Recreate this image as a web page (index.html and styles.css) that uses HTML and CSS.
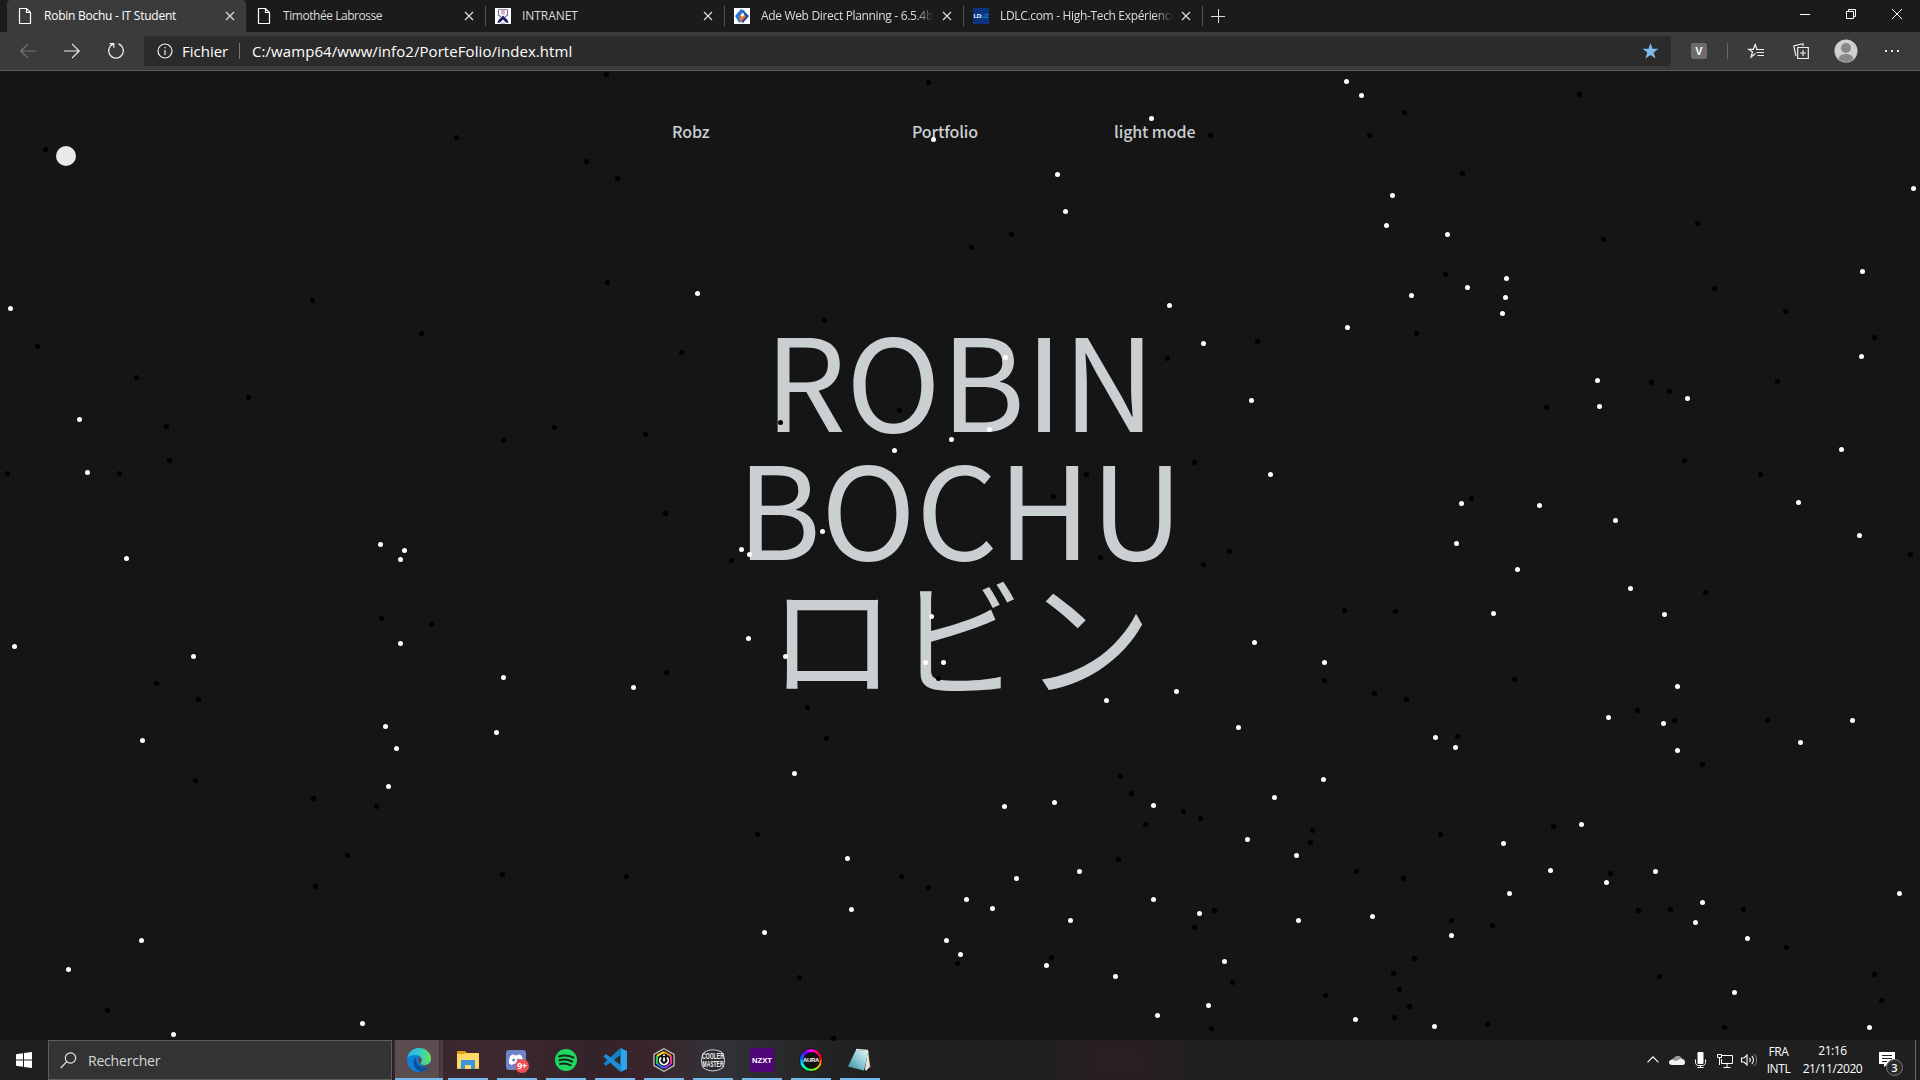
FILE: index.html
```html
<!DOCTYPE html>
<html lang="fr">
<head>
<meta charset="utf-8">
<title>Robin Bochu - IT Student</title>
<link rel="stylesheet" href="styles.css">
</head>
<body>
<div class="screen">
  <header class="tabstrip">
    <div class="tab active">
      <svg class="fav" viewBox="0 0 16 16"><path d="M2.5.5h7l4 4v11h-11zM9.500.5v4h4" fill="none" stroke="#fff" stroke-width="1.2"/></svg>
      <span class="title t1">Robin Bochu - IT Student</span>
      <svg class="close" viewBox="0 0 10 10"><path d="M1 1l8 8M9 1L1 9"/></svg>
    </div>
    <div class="tab">
      <svg class="fav" viewBox="0 0 16 16"><path d="M2.500.5h7l4 4v11h-11zM9.500.5v4h4" fill="none" stroke="#fff" stroke-width="1.2"/></svg>
      <span class="title t2">Timothée Labrosse</span>
      <svg class="close" viewBox="0 0 10 10"><path d="M1 1l8 8M9 1L1 9"/></svg>
    </div>
    <div class="tab sep">
      <svg class="fav" viewBox="0 0 16 16"><path fill="#fff" d="M0 0h16v16H0z"/><path d="M3.500 1.500v5.500l2.500 2M12.500 1.500v5.500l-2.500 2" fill="none" stroke="#6b6eb0" stroke-width="1.200"/><path d="M2.500 15l1-3L8 7.500l4.500 4.500 1 3-2.500-.5-3-3-3 3z" fill="#1d1f66"/><path d="M7 2v4.500M9 2v4.500" stroke="#d65a68"/><path d="M4 1.500h8M6 15.200h4" stroke="#8a8cc0"/></svg>
      <span class="title t3">INTRANET</span>
      <svg class="close" viewBox="0 0 10 10"><path d="M1 1l8 8M9 1L1 9"/></svg>
    </div>
    <div class="tab sep">
      <svg class="fav" viewBox="0 0 16 16"><path fill="#fff" d="M0 0h16v16H0z"/><path d="M1 8l6-7 4 2-5 6 1 5-2 .5z" fill="#2a7bd0"/><path d="M9 2l6 6-6 7-4-3 5-4z" fill="#174f9c"/><path d="M5 9l4-4 3 3.500-5 5.500-2-2 2-2z" fill="#e8703a"/><path d="M6.500 7l2-2 2 2-2 2z" fill="#fff"/></svg>
      <span class="title fade">Ade Web Direct Planning - 6.5.4b</span>
      <svg class="close" viewBox="0 0 10 10"><path d="M1 1l8 8M9 1L1 9"/></svg>
    </div>
    <div class="tab sep">
      <span class="fav ldlc"><b>LD</b><i>LC</i></span>
      <span class="title fade">LDLC.com - High-Tech Expérience</span>
      <svg class="close" viewBox="0 0 10 10"><path d="M1 1l8 8M9 1L1 9"/></svg>
    </div>
    <div class="newtab sep"><svg width="14" height="14" viewBox="0 0 14 14"><path d="M7.500 0v14M0 7.500h14" stroke="#ddd"/></svg></div>
    <div class="wincontrols">
      <svg viewBox="0 0 10 10"><path d="M0 5.500h10"/></svg>
      <svg viewBox="0 0 10 10"><path d="M.5 2.500h7v7h-7zM2.500 2.500v-2h7v7h-2"/></svg>
      <svg viewBox="0 0 10 10"><path d="M0 0l10 10M10 0L0 10"/></svg>
    </div>
  </header>

  <div class="toolbar">
    <svg class="nav-ico dim" viewBox="0 0 16 16"><path d="M16 8H1M8 .8L.8 8 8 15.200"/></svg>
    <svg class="nav-ico" viewBox="0 0 16 16"><path d="M0 8h15M8 .8L15.200 8 8 15.200"/></svg>
    <svg class="nav-ico" viewBox="0 0 16 16"><path d="M10.500.9a7.300 7.300 0 1 1-5 0M1.500.6h4.300v4.200"/></svg>
    <div class="address">
      <svg class="info" viewBox="0 0 16 16"><circle cx="8" cy="8" r="7"/><path d="M8 7v5M8 4v1.300"/></svg>
      <span class="scheme">Fichier</span>
      <span class="bar"></span>
      <span class="url">C:/wamp64/www/info2/PorteFolio/index.html</span>
      <svg class="bookmark" viewBox="0 0 16 16"><path d="M8 0l2 5.700 6 .1-4.800 3.700L13 15.500 8 12l-5 3.500 1.800-6L0 5.800l6-.1z" fill="#7db9ec"/></svg>
    </div>
    <span class="ext">V</span>
    <span class="divider"></span>
    <svg class="act fvs" viewBox="0 0 16 16"><path d="M7.500 10.500L3 14l1.500-5L.8 6.300h4.500L7.200 1.500l1.700 4.700M8 6.500h8M8.500 9.500H16M9.500 12.500H16"/></svg>
    <svg class="act col" viewBox="0 0 16 16"><path d="M4.700 4.500h10.600v11H4.700zM10 7v6M7 10h6M3 13L.8 3l9-2.300.6 2.300"/></svg>
    <svg class="avatar" viewBox="0 0 24 24"><defs><clipPath id="av"><circle cx="12" cy="12" r="11"/></clipPath></defs><circle cx="12" cy="12" r="11.500" fill="#d2d0ce"/><g clip-path="url(#av)" fill="#8a8886"><circle cx="12" cy="9" r="5"/><ellipse cx="12" cy="20" rx="7.500" ry="5"/></g></svg>
    <svg class="dots" viewBox="0 0 16 4"><path d="M1 1h2v2H1zM7 1h2v2H7zM13 1h2v2h-2z" fill="#e8e8e8"/></svg>
  </div>

  <main class="page">
    <nav class="menu"><a class="m1">Robz</a><a class="m2">Portfolio</a><a>light mode</a></nav>
    <h1 class="name">ROBIN<br>BOCHU<br>ロビン</h1>
    <svg class="sky" id="sky" viewBox="0 0 1920 969"></svg>
  </main>

  <footer class="taskbar">
    <div class="start"><svg width="16" height="16" viewBox="0 0 16 16"><path d="M0 2.200L7 1.200v6.300H0zM8 1l8-1v7.500H8zM0 8.500h7v6.300l-7-1zM8 8.500h8V16l-8-1z" fill="#fff"/></svg></div>
    <div class="search"><svg width="17" height="17" viewBox="0 0 17 17"><circle cx="10.500" cy="6" r="5.200"/><path d="M6.800 9.700L.7 16"/></svg><span>Rechercher</span></div>
    <div class="apps">
      <div class="app edge"><svg viewBox="0 0 24 24"><defs><linearGradient id="e1" x1="0" x2="1"><stop offset="0" stop-color="#2cb5e8"/><stop offset=".55" stop-color="#35c9c5"/><stop offset="1" stop-color="#6be34f"/></linearGradient></defs><circle cx="12" cy="12" r="12" fill="#0f7fd8"/><path d="M.3 10C1.500 3.500 6.500 0 12 0c7 0 12 5 12 10.500 0 4-3 6.500-6.500 6.500-2.500 0-4-.8-4-1.800 0-.8 1.200-1.200 1.200-3.200 0-2.700-2.700-5-6.500-5C4.500 7 1.500 8.200.3 10z" fill="url(#e1)"/><path d="M9 9c-4 3-3.500 12 4.500 14.800 3 .2 7-2 9-5.300-3 1.500-7 1.500-9.500-.3-2.600-1.700-4.500-5-4-9.200z" fill="#0c4f94"/><path d="M11 9.500c2.500-.8 4 .8 3.700 2.800-.2 1.300-1.200 2-1.200 3l-1 .7c-1.700-1.800-2.200-4.300-1.500-6.500z" fill="#5b4c50"/><path d="M13.500 16c2.500 2 6.500 2 10-1.500l1.500 2-2.300 2.500c-3.500 1.500-7.200.5-9.200-3z" fill="#5b4c50"/></svg></div>
      <div class="app"><svg viewBox="0 0 24 24"><path d="M1 3h8l2 2h-10z" fill="#d99a00"/><path d="M1 5h22v16H1z" fill="#ffd766"/><path d="M1 3h8v3H1z" fill="#e2a10a"/><path d="M5 12h14v9h-4v-4H9v4H5z" fill="#3c95d6"/><path d="M1 20h4v1H1zM19 20h4v1h-4z" fill="#eab530"/></svg></div>
      <div class="app badge9"><svg viewBox="0 0 24 24"><rect x="1" y="2" width="20" height="20" rx="3" fill="#6f83c9"/><path d="M4 15.500c-.5-3 .3-6 1.700-8C7 6.600 8.500 6.300 8.500 6.300l.7 1h3.600l.7-1s1.500.3 2.800 1.200c1.400 2 2.200 5 1.700 8-1.500 1.300-3.200 1.500-3.200 1.500l-1-1.300H8.200l-1 1.300S5.500 16.800 4 15.500z" fill="#fff"/><circle cx="8.700" cy="12" r="1.500" fill="#6f83c9"/><circle cx="13.300" cy="12" r="1.500" fill="#6f83c9"/></svg><span class="count">9+</span></div>
      <div class="app"><svg viewBox="0 0 24 24"><circle cx="12" cy="12" r="11" fill="#1ed760"/><path d="M5 8.500c5-1.600 10-1 14.500 1.200M5.500 12.300c4.500-1.300 8.500-.8 12.500 1.200M6 16c4-1 7-.6 10.500 1.200" fill="none" stroke="#18251b" stroke-width="2" stroke-linecap="round"/></svg></div>
      <div class="app"><svg viewBox="0 0 24 24"><path d="M17.500 0L24 3v18l-6.500 3z" fill="#2aa5f0"/><path d="M17.500 0v7L3 18l-2.500-2.500z" fill="#1480c8"/><path d="M17.500 24v-7L3 6 .5 8.500z" fill="#1d90dc"/></svg></div>
      <div class="app"><svg viewBox="0 0 24 24"><path d="M12 .8l10 5.600v11.200l-10 5.600-10-5.600V6.400z" fill="#111" stroke="#c8c8c8" stroke-width="1.300"/><g fill="none" stroke-width="2.200"><path d="M5 8l7-4" stroke="#e8dc28"/><path d="M12 4l7 4" stroke="#ee8420"/><path d="M19 8v8" stroke="#e63a8c"/><path d="M19 16l-7 4" stroke="#9b3ae0"/><path d="M12 20l-7-4" stroke="#2a72ee"/><path d="M5 16V8" stroke="#30c55a"/></g><circle cx="12" cy="12" r="6" fill="#111"/><path d="M9 9.500a4.200 4.200 0 1 0 6 0M12 6.500V8M12 9.500v4" fill="none" stroke="#fff" stroke-width="1.800"/></svg></div>
      <div class="app"><svg viewBox="0 0 24 24"><path d="M3 4.500c5-3.500 13-3.500 18 0 3 4 3 11 1 15-6 4.500-14 4.500-20 0-2-4-2-11 1-15z" fill="#2c2d31" stroke="#d4d4d4"/><g font-family="Liberation Sans" font-weight="700" fill="#f2f2f2" text-anchor="middle"><text x="12" y="11.200" font-size="9.500" textLength="22" lengthAdjust="spacingAndGlyphs">COOLER</text><text x="12" y="19.200" font-size="9.500" textLength="21" lengthAdjust="spacingAndGlyphs">MASTER</text></g></svg></div>
      <div class="app"><svg viewBox="0 0 24 24"><path fill="#4f0479" d="M0 0h24v24H0z"/><text x="12" y="15" text-anchor="middle" font-family="Liberation Sans" font-weight="700" font-size="8" fill="#fff" textLength="20" lengthAdjust="spacingAndGlyphs">NZXT</text></svg></div>
      <div class="app"><span class="aura"><b>AURA</b></span></div>
      <div class="app"><svg viewBox="0 0 24 24"><defs><linearGradient id="n1" x1="0" y1="1" x2="1" y2="0"><stop offset="0" stop-color="#2f8ca3"/><stop offset=".6" stop-color="#9fd3de"/><stop offset="1" stop-color="#e4f4f6"/></linearGradient></defs><path d="M20 3l2.500 16-4 2z" fill="#b59b62"/><path d="M20 3l1.500 16-3.500 4-1-2z" fill="#e6e6e0"/><path d="M8 2l12.500 1L16 22.500 0 18.500z" fill="url(#n1)"/><path d="M8 1.500l12 1" stroke="#ddd" stroke-width="1.500"/></svg></div>
    </div>
    <div class="tray">
      <svg class="chev" viewBox="0 0 12 7"><path d="M.5 6.300L6 .8l5.500 5.500" fill="none" stroke="#fff" stroke-width="1.200"/></svg>
      <svg class="cloud" viewBox="0 0 16 10"><path d="M2 6C2 4 4 3 5 3.200 6 .5 11-.8 13 3.500c2 .2 3 1.500 3 3z" fill="#9b9b9b"/><path d="M0 7.500C0 5.500 2 4.500 4 5l3 1 4-2c2 0 5 1.500 5 3.500S14.500 10 13 10H3C1 10 0 9 0 7.500z" fill="#f2f2f2"/></svg>
      <svg class="mic" viewBox="0 0 11 16"><rect x="2.500" width="6" height="12" rx="1" fill="#fff"/><path d="M.5 7.500v3c0 2 1.500 3 3 3h4c1.500 0 3-1 3-3v-3M5.500 13v2.500M2.500 15.500h6" fill="none" stroke="#fff"/></svg>
      <svg class="net" viewBox="0 0 16 14"><path d="M4.500 1.500h11v8h-11V5M10 10v3M6.500 13.500h7M.5.5h4v3h-4zM2.500 4v7" fill="none" stroke="#fff"/></svg>
      <svg class="vol" viewBox="0 0 17 14"><path d="M.5 5v4H3l3 3V2L3 5zM8.500 5c1 1 1 3 0 4M10.800 3c2.200 2 2.200 6 0 8" fill="none" stroke="#fff" stroke-width="1.100"/><path d="M13.300 1c3 3 3 9 0 12" fill="none" stroke="#888"/></svg>
      <div class="lang"><span>FRA</span><span>INTL</span></div>
      <div class="clock"><span class="hour">21:16</span><span>21/11/2020</span></div>
      <div class="notif"><svg viewBox="0 0 16 15"><path d="M0 0h16v12H9l-4 3v-3H0z" fill="#fff"/><path d="M3 3.500h10M3 6.500h10M3 9.500h5" stroke="#222"/></svg><span class="num">3</span></div>
      <span class="desk"></span>
    </div>
  </footer>
</div>
<script src="sky.js"></script>
</body>
</html>
```
FILE: styles.css
```css
* { box-sizing: border-box; }
body { margin: 0; background: #151515; font-family: "Open Sans", "Noto Sans", sans-serif; color: #fff; overflow: hidden; }
svg { display: block; flex: none; overflow: visible; }
.screen { width: 1920px; height: 1080px; display: flex; flex-direction: column; }

.tabstrip { height: 32px; background: #1b1b1b; display: flex; padding-left: 7px; flex: none; }
.tab { width: 239px; flex: none; display: flex; align-items: center; padding: 0 12px 0 10px; }
.tab.active { background: #3b3b3b; border-radius: 4px 4px 0 0; }
.sep { background: linear-gradient(#555, #555) 0 6px / 1px 20px no-repeat; }
.fav { width: 16px; height: 16px; }
.title { width: 175px; margin-left: 11px; font-size: 12px; line-height: 16px; white-space: nowrap; overflow: hidden; letter-spacing: -.33px; color: #dcdcdc; flex: none; }
.title.t1 { color: #fff; letter-spacing: -.25px; }
.title.t2 { letter-spacing: -.45px; }
.title.t3 { letter-spacing: -.05px; }
.fade { -webkit-mask-image: linear-gradient(90deg, #000 88%, transparent 99%); mask-image: linear-gradient(90deg, #000 88%, transparent 99%); }
.close { width: 10px; height: 10px; margin-left: 6px; stroke: #ddd; stroke-width: 1.200; }
.ldlc { background: #0a3480; display: flex; align-items: center; justify-content: center; font: 700 6px "Liberation Sans", sans-serif; letter-spacing: -.2px; flex: none; }
.ldlc i { font-style: normal; color: #149ce0; }
.newtab { width: 34px; padding: 9px 0 0 9px; }
.wincontrols { margin-left: auto; display: flex; gap: 36px; padding: 9px 18px 0 0; }
.wincontrols svg { width: 10px; height: 10px; fill: none; stroke: #fff; }

.toolbar { height: 39px; flex: none; background: #3b3b3b; border-bottom: 1px solid #5c5c5c; display: flex; align-items: center; padding: 0 20px; }
.nav-ico { width: 16px; height: 16px; margin-right: 28px; fill: none; stroke: #eee; stroke-width: 1.200; }
.nav-ico.dim { stroke: #777; }
.address { width: 1527px; height: 30px; margin-left: -8px; background: #2b2b2b; border-radius: 3px; display: flex; align-items: center; padding: 0 12px 0 13px; }
.info { width: 16px; height: 16px; fill: none; stroke: #eee; stroke-width: 1.200; }
.scheme { width: 65px; flex: none; padding-left: 9px; font-size: 15px; }
.bar { width: 1px; height: 16px; flex: none; background: #777; margin: 0 12px 0 1px; }
.url { flex: 1; font-size: 15px; letter-spacing: .07px; }
.bookmark { width: 17px; height: 16px; }
.ext { width: 16px; height: 16px; margin-left: 20px; border-radius: 2px; background: #6c6c6c; font: 700 11px/16px "Liberation Sans", sans-serif; text-align: center; }
.divider { width: 1px; height: 16px; background: #666; margin: 0 20px; }
.act { width: 16px; height: 16px; fill: none; stroke: #eee; stroke-width: 1.200; }
.col { margin: 0 25px 0 29px; }
.avatar { width: 24px; height: 24px; }
.dots { width: 16px; height: 4px; margin-left: 26px; }

.page { height: 969px; flex: none; position: relative; background: #151515; font-family: "Noto Sans CJK JP", sans-serif; color: #cacfd2; }
.menu { height: 242px; padding: 48px 0 0 672px; display: flex; font-size: 16px; line-height: 24px; font-weight: 500; letter-spacing: -.12px; }
.menu a { flex: none; }
.m1 { width: 240px; }
.m2 { width: 202px; }
.name { margin: 0; font-size: 128px; line-height: 128px; font-weight: 400; text-align: center; }
.sky { position: absolute; inset: 0; width: 1920px; height: 969px; }

.taskbar { height: 40px; flex: none; display: flex; background:
  radial-gradient(ellipse 90px 60px at 1120px 20px, #2d1f22, transparent),
  linear-gradient(90deg, #1f1f1f 0 392px, #38242b 394px, #3f2930 490px, #34232a 590px, #3a242b 645px, #323338 715px, #222223 835px, #1f1f1f 900px); }
.start { width: 48px; padding: 12px 16px; }
.search { width: 344px; border: 1px solid #5d5d5d; background: #333; display: flex; align-items: center; padding-left: 11px; font-size: 14px; letter-spacing: -.2px; color: #d8d8d8; }
.search svg { fill: none; stroke: #e8e8e8; stroke-width: 1.200; margin-right: 11px; }
.apps { display: flex; gap: 9px; padding-left: 3px; }
.app { width: 40px; height: 40px; border-bottom: 2px solid #76b9ed; padding: 8px; position: relative; }
.app svg { width: 24px; height: 24px; }
.app.edge { width: 48px; margin-right: -4px; padding-left: 12px; background: linear-gradient(90deg, #5b4c50 44px, #3d3034 44px 45px, #4c3c41 45px); }
.count { position: absolute; left: 18px; top: 19px; width: 14px; height: 14px; border-radius: 50%; background: #ee4f53; font: 700 9px/14px "Open Sans", sans-serif; text-align: center; letter-spacing: -.3px; }
.aura { display: flex; width: 24px; height: 24px; background: conic-gradient(#f0f, #f06, #f00, #fc0, #8f0, #0f6, #0ff, #06f, #60f, #f0f); border: 1px solid #161616; border-radius: 50%; align-items: center; justify-content: center; }
.aura b { width: 17px; height: 17px; border-radius: 50%; background: #101010; font: 700 6px/17px "Liberation Sans", sans-serif; text-align: center; letter-spacing: -.3px; }
.tray { margin-left: auto; display: flex; align-items: flex-start; }
.chev { width: 12px; height: 7px; margin-top: 16px; }
.cloud { width: 16px; height: 10px; margin: 15px 0 0 10px; }
.mic { width: 11px; height: 16px; margin: 12px 0 0 10px; }
.net { width: 16px; height: 14px; margin: 14px 0 0 11px; }
.vol { width: 17px; height: 14px; margin: 13px 0 0 8px; }
.lang, .clock { display: flex; flex-direction: column; align-items: center; font-size: 12px; line-height: 17px; letter-spacing: -.4px; padding-top: 3px; }
.lang { width: 41px; }
.clock { width: 67px; padding-top: 2px; }
.clock span { line-height: 18px; }
.notif { width: 25px; margin: 12px 0 0 13px; position: relative; }
.notif svg { width: 16px; height: 15px; }
.num { position: absolute; left: 7px; top: 7px; width: 17px; height: 17px; border: 1px solid #777; border-radius: 50%; background: #2b2b2b; font: 600 11px/15px "Open Sans", sans-serif; text-align: center; }
.desk { width: 1px; height: 40px; background: #6b6b6b; margin: 0 4px 0 11px; }
```
FILE: sky.js
```js
// Star field: three side-by-side panels, 640px wide each. Coordinates are [x, y] pairs on a 1568-unit grid.
const white = [
  [26,382,195,559,214,644,310,782,35,922,474,938,349,1073,932,759,991,769,981,783,981,918,944,1050,971,1086,952,1146,1233,972,1552,988,1216,1060,347,1393,168,1439,425,1543,888,1526],
  [719,111,1253,78,1023,167,1042,226,141,358,1297,377,1380,438,1498,529,895,460,856,575,763,591,623,609,1545,647,447,738,249,767,268,775,266,910,356,938,714,874,699,948,743,948,1143,1009,1314,994,1506,916,1466,1052,378,1126,893,1178,1015,1172,1258,1177,1554,1164,1488,1231,508,1262,922,1294,1077,1282,800,1327,863,1342,1258,1327,1371,1350,1055,1361,518,1343,305,1380,751,1393,785,1415,996,1433,1165,1450,1432,1426,1393,1497,1268,1513],
  [163,18,200,41,275,201,261,249,410,263,555,334,459,348,322,361,552,364,545,390,165,412,1552,190,1427,322,1425,458,778,497,783,538,998,526,1376,607,1270,692,1420,745,445,694,636,697,822,721,432,758,582,799,859,830,523,870,942,871,109,948,974,986,805,1036,939,1046,974,1089,1402,1041,1275,1076,381,1068,430,1084,106,1135,739,1207,547,1238,40,1257,663,1281,920,1282,800,1300,562,1318,1518,1318,1035,1332,1018,1364,1145,1390,226,1354,45,1361,420,1385,1113,1476,185,1519,378,1530,1444,1532]
];
const black = [
  [1486,7,111,127,1118,108,1437,146,1513,174,1488,340,765,369,1033,422,92,442,334,492,609,524,408,570,415,625,293,646,18,646,1233,593,1358,572,935,878,1057,887,383,982,486,1007,479,1137,768,1166,922,1178,851,1257,773,1306,1231,1287,1535,1290,263,1505],
  [707,20,1398,105,910,263,812,284,452,401,102,452,13,583,62,710,224,785,65,964,344,564,636,545,1292,462,1513,434,1358,628,1094,647,1013,682,1128,780,1380,791,1444,770,731,974,410,1020,457,1070,288,1223,641,1290,707,1308,778,1430,391,1452,474,1550,1177,1130,1204,1158,1238,1207,1331,1186,1373,1198,1172,1263,1407,1345,1358,1372,1008,1420,1451,1460,1400,1534],
  [734,39,305,68,219,105,447,166,1023,246,792,271,405,327,1064,350,334,422,1238,386,1456,428,1219,498,910,500,954,514,653,540,991,625,1177,647,469,686,1545,775,1042,836,158,865,283,866,109,977,231,998,310,1007,574,975,876,1025,966,1041,1194,1041,435,1066,1035,1111,79,1217,74,1236,393,1223,670,1210,187,1282,302,1294,810,1286,878,1345,957,1343,1135,1343,420,1361,520,1369,329,1422,278,1446,293,1471,111,1481,317,1498,280,1516,508,1527,1241,1404,930,1450,1456,1447,1474,1489,1089,1532]
];
const sky = document.getElementById('sky');
function dot(cx, cy, r, fill) {
  const c = document.createElementNS('http://www.w3.org/2000/svg', 'circle');
  c.setAttribute('cx', cx); c.setAttribute('cy', cy); c.setAttribute('r', r); c.setAttribute('fill', fill);
  sky.appendChild(c);
}
function scatter(panels, fill) {
  panels.forEach((p, n) => {
    for (let i = 0; i < p.length; i += 2)
      dot(n * 640 + Math.floor(p[i] / 2.45) + .5, Math.round(p[i + 1] / 1.6 - 1.5) + .5, 2.5, fill);
  });
}
scatter(black, '#000');
scatter(white, '#fff');
dot(66, 85, 10, '#e8eaea');
```
